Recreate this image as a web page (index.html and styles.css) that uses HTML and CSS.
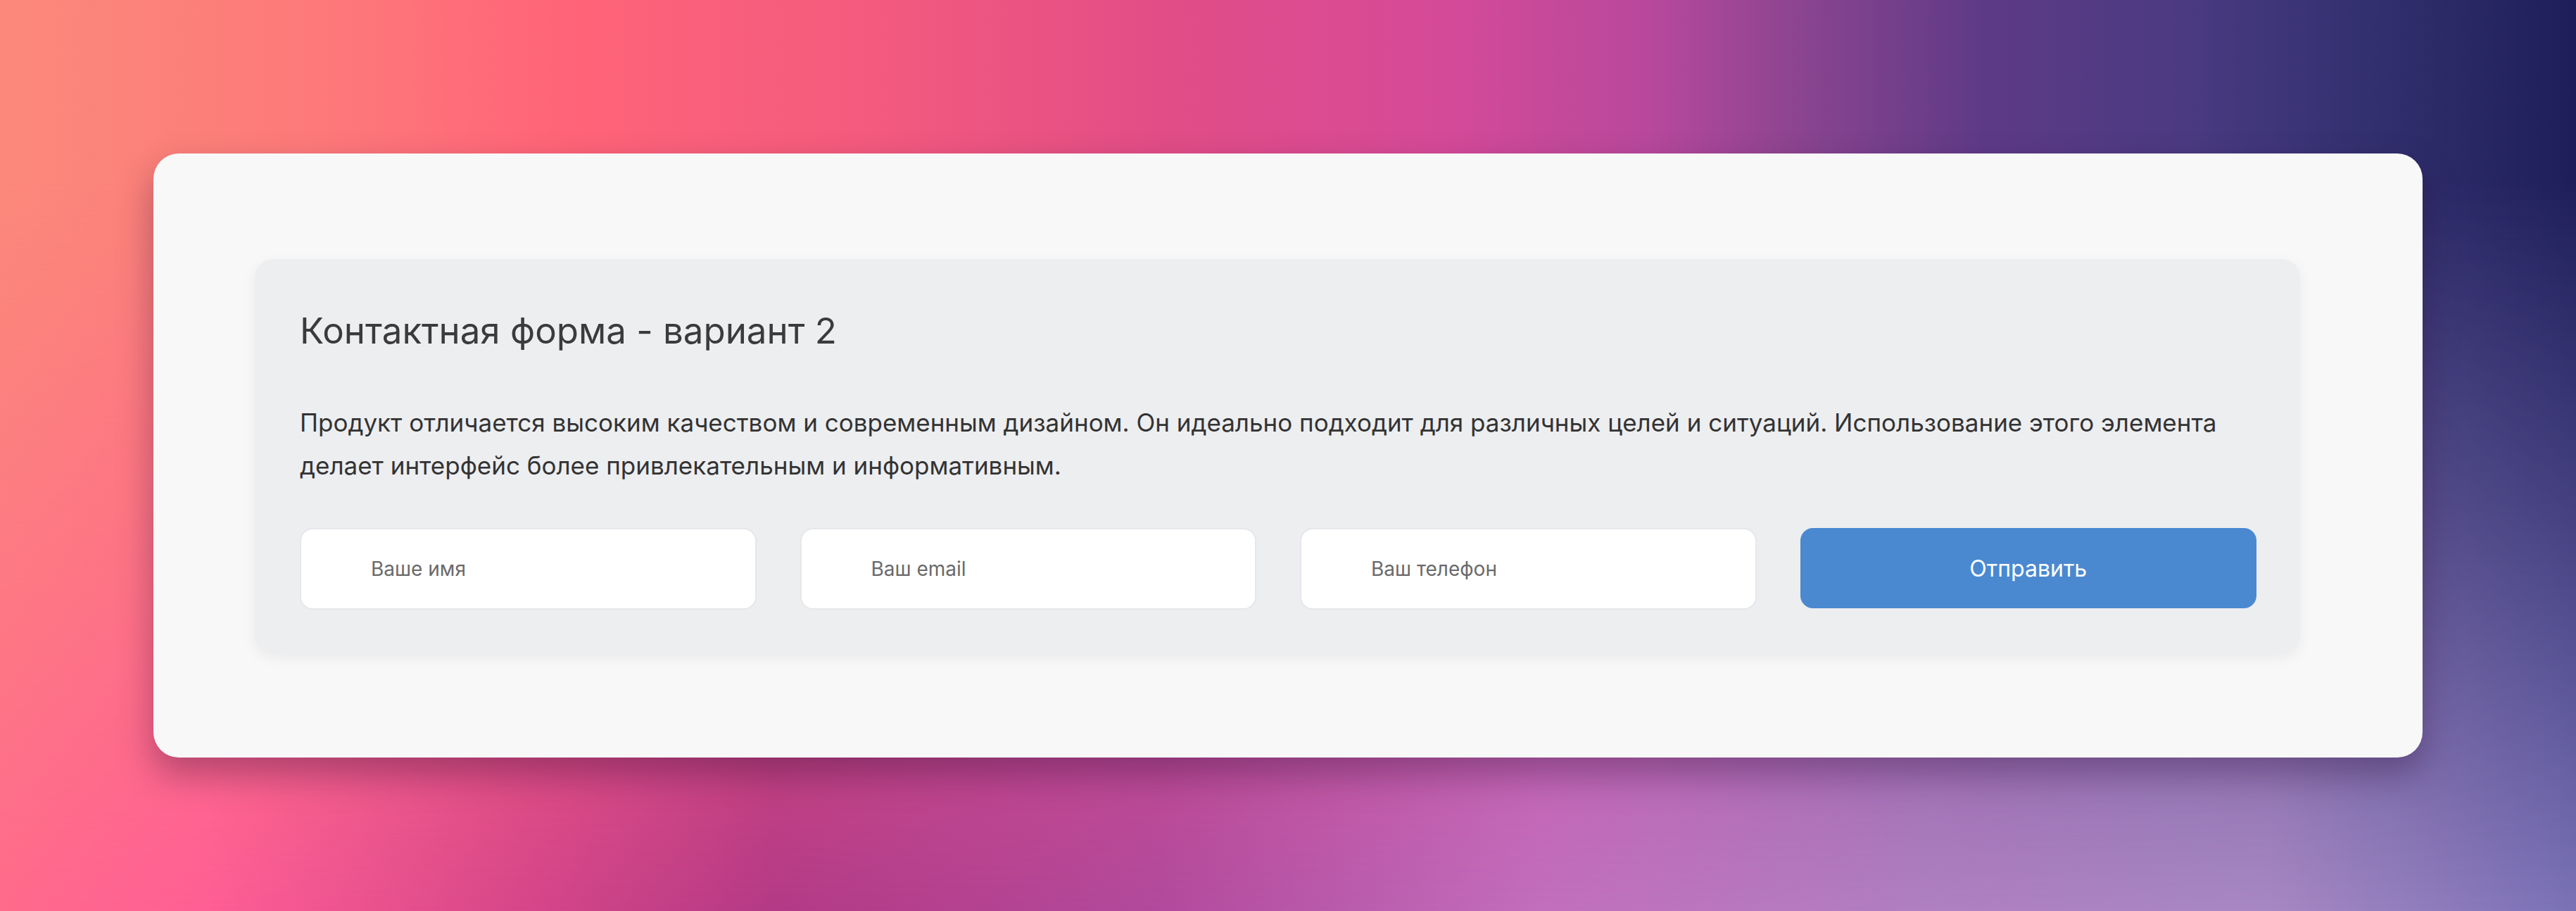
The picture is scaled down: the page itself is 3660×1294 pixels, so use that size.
FILE: index.html
```html
<!DOCTYPE html>
<html lang="ru">
<head>
<meta charset="utf-8">
<title>Контактная форма - вариант 2</title>
<link rel="stylesheet" href="styles.css">
</head>
<body>
<div class="backdrop"></div>
<main class="frame">
  <section class="card">
    <h2 class="card-title">Контактная форма - вариант 2</h2>
    <p class="card-text">Продукт отличается высоким качеством и современным дизайном. Он идеально подходит для различных целей и ситуаций. Использование этого элемента делает интерфейс более привлекательным и информативным.</p>
    <form class="form-row">
      <input class="field" type="text" placeholder="Ваше имя">
      <input class="field" type="email" placeholder="Ваш email">
      <input class="field" type="tel" placeholder="Ваш телефон">
      <button class="submit" type="button">Отправить</button>
    </form>
  </section>
</main>
</body>
</html>
```

FILE: styles.css
```css
* { box-sizing: border-box; }

html, body {
  margin: 0;
  height: 100%;
}

body {
  position: relative;
  padding: 218px;
  font-family: Inter, "Noto Sans", sans-serif;
  background: linear-gradient(to right,
    #ff6b8c 0%, #ff5f95 8%, #d8478a 20%, #b43a86 30%, #b34a9c 45%,
    #c26fbd 60%, #b080c2 75%, #a888c4 88%, #7a72b6 100%);
  overflow: hidden;
}

.backdrop {
  position: absolute;
  inset: 0;
  background: linear-gradient(to right,
    #fb897a 0%, #fd7a7a 12%, #ff6478 22%, #f35a7e 34%, #e24d86 45%,
    #d54a98 56%, #b8489c 64%, #8a4490 70%, #5e3a86 77%, #4a3a82 85%,
    #32306e 92%, #1e1f5a 100%);
  -webkit-mask-image: linear-gradient(to bottom, #000 0%, #000 20%, rgba(0,0,0,0.6) 55%, transparent 100%);
  mask-image: linear-gradient(to bottom, #000 0%, #000 20%, rgba(0,0,0,0.6) 55%, transparent 100%);
}

.frame {
  position: relative;
  height: 858px;
  background: #f8f8f8;
  border-radius: 36px;
  padding: 150px 174px 148px 144px;
  box-shadow: 0 24px 50px rgba(40, 10, 50, 0.35);
}

.card {
  background: #edeef0;
  border-radius: 26px;
  padding: 72px 62px 62px 64px;
  box-shadow: 0 6px 20px rgba(0, 0, 0, 0.06);
}

.card-title {
  margin: 0 0 70px;
  font-size: 51px;
  line-height: 60px;
  font-weight: 400;
  color: #3b3b3c;
}

.card-text {
  margin: 0 0 58px;
  font-size: 35px;
  line-height: 61px;
  color: #333334;
}

.form-row {
  display: grid;
  grid-template-columns: repeat(4, 1fr);
  gap: 62px;
  margin: 0;
}

.field {
  height: 116px;
  border: 2px solid #e6e7ea;
  border-radius: 18px;
  background: #ffffff;
  padding: 0 0 0 99px;
  font-family: inherit;
  font-size: 28px;
  color: #333;
  outline: none;
}

.field::placeholder {
  color: #6a6a6a;
}

.submit {
  height: 114px;
  border: none;
  border-radius: 18px;
  background: #4a89d0;
  color: #ffffff;
  font-family: inherit;
  font-size: 32px;
}
```
